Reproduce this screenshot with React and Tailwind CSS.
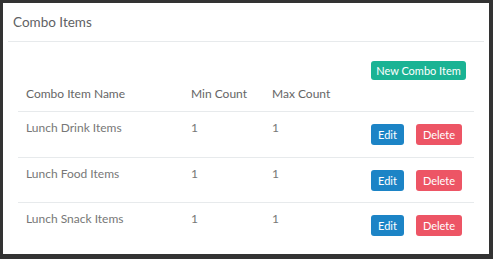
const rows = [
  { name: "Lunch Drink Items", min: 1, max: 1 },
  { name: "Lunch Food Items", min: 1, max: 1 },
  { name: "Lunch Snack Items", min: 1, max: 1 },
];

export default function App() {
  return (
    <div
      className="w-[493px] h-[259px] bg-[#333333] pt-[3px] pl-[3px] pr-[4px] pb-[5px]"
      style={{ fontFamily: "Lato, 'Open Sans', sans-serif" }}
    >
      <div className="h-full bg-white px-[5px]">
        {/* Card header */}
        <div className="h-[39px] border-b border-[#e7eaec] pl-[5px] flex items-center">
          <h5 className="text-[13.5px] text-[#5f6264]">Combo Items</h5>
        </div>

        {/* Table */}
        <div className="px-[10px] text-[12px] text-[#777]">
          <div className="grid grid-cols-[165px_81px_99px_1fr] h-[70px] border-b border-[#e7eaec]">
            <div className="self-end px-[8px] pb-[8px] leading-[18px] text-[#666]">Combo Item Name</div>
            <div className="self-end px-[8px] pb-[8px] leading-[18px] text-[#666]">Min Count</div>
            <div className="self-end px-[8px] pb-[8px] leading-[18px] text-[#666]">Max Count</div>
            <div className="self-start px-[8px] pt-[19px]">
              <button className="w-[95px] h-[19px] whitespace-nowrap rounded-[3px] bg-[#1ab394] text-white text-[11px] leading-[19px]">
                New Combo Item
              </button>
            </div>
          </div>

          {rows.map((r, i) => (
            <div
              key={r.name}
              className={
                "grid grid-cols-[165px_81px_99px_1fr] " +
                (i === 0 ? "h-[46px] " : "h-[45px] ") +
                (i < rows.length - 1 ? "border-b border-[#e7eaec]" : "")
              }
            >
              <div className="px-[8px] pt-[7px] leading-[18px]">{r.name}</div>
              <div className="px-[8px] pt-[7px] leading-[18px]">{r.min}</div>
              <div className="px-[8px] pt-[7px] leading-[18px]">{r.max}</div>
              <div className="px-[8px] pt-[12px] flex gap-[12px] items-start">
                <button className="w-[33px] h-[21px] rounded-[3px] bg-[#1c84c6] text-white text-[11px] leading-[21px]">
                  Edit
                </button>
                <button className="w-[46px] h-[21px] rounded-[3px] bg-[#ed5565] text-white text-[11px] leading-[21px]">
                  Delete
                </button>
              </div>
            </div>
          ))}
        </div>
      </div>
    </div>
  );
}
